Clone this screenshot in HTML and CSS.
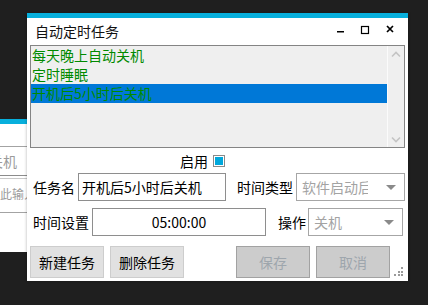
FILE: index.html
```html
<!DOCTYPE html>
<html lang="zh-CN">

<head>
    <meta charset="UTF-8">
    <meta name="viewport" content="width=device-width, initial-scale=1.0">
    <title>自动定时任务</title>
    <link rel="stylesheet" href="styles.css">
</head>

<body>
    <div class="desk">

        <!-- window behind, only its right edge shows -->
        <div class="win back">
            <div class="accent"></div>
            <div class="bk-field"></div>
            <div class="bk-combo"><span>关机</span></div>
            <div class="bk-gap"></div>
            <div class="bk-input"><span>在此输入</span></div>
        </div>

        <div class="win main">
            <div class="accent"></div>
            <div class="titlebar">
                <span class="title">自动定时任务</span>
                <svg class="ctrls" width="64" height="27" viewBox="0 0 64 27">
                    <rect x="3" y="13" width="7" height="1.5" fill="#000" />
                    <rect x="27.5" y="8.5" width="7" height="7" fill="none" stroke="#000" stroke-width="1.2" />
                    <path d="M53 8 L59 14 M59 8 L53 14" stroke="#000" stroke-width="1.7" />
                </svg>
            </div>

            <div class="listbox">
                <ul class="items">
                    <li>每天晚上自动关机</li>
                    <li>定时睡眠</li>
                    <li class="sel">开机后5小时后关机</li>
                </ul>
                <div class="vscroll">
                    <svg width="16" height="16" viewBox="0 0 16 16">
                        <path d="M4 10.5 L8 6.5 L12 10.5" fill="none" stroke="#c4c4c4" stroke-width="1.6" />
                    </svg>
                    <svg width="16" height="16" viewBox="0 0 16 16">
                        <path d="M4 6.5 L8 10.5 L12 6.5" fill="none" stroke="#c4c4c4" stroke-width="1.6" />
                    </svg>
                </div>
            </div>

            <div class="row enable">
                <span>启用</span>
                <span class="check"><i></i></span>
            </div>

            <div class="row fields">
                <label class="lbl">任务名</label>
                <div class="textbox name">开机后5小时后关机</div>
                <label class="lbl type-lbl">时间类型</label>
                <div class="combo type"><span>软件启动后</span><i class="arrow"></i></div>
            </div>

            <div class="row fields second">
                <label class="lbl">时间设置</label>
                <div class="textbox time">05:00:00</div>
                <label class="lbl op-lbl">操作</label>
                <div class="combo op"><span>关机</span><i class="arrow"></i></div>
            </div>

            <div class="row buttons">
                <button class="btn">新建任务</button>
                <button class="btn">删除任务</button>
                <button class="btn off push">保存</button>
                <button class="btn off">取消</button>
            </div>

            <!-- size grip -->
            <svg class="grip" width="12" height="12" viewBox="0 0 12 12">
                <rect x="8" y="1" width="2" height="2" fill="#9a9a9a" />
                <rect x="5" y="5" width="2" height="2" fill="#9a9a9a" />
                <rect x="8" y="5" width="2" height="2" fill="#9a9a9a" />
                <rect x="1" y="8" width="2" height="2" fill="#9a9a9a" />
                <rect x="5" y="8" width="2" height="2" fill="#9a9a9a" />
                <rect x="8" y="8" width="2" height="2" fill="#9a9a9a" />
            </svg>
        </div>
    </div>
</body>

</html>
```

FILE: styles.css
```css
* {
    box-sizing: border-box;
}

body {
    margin: 0;
    background-color: #1f1f1f;
    font-family: "Noto Sans CJK SC", "Noto Sans", sans-serif;
    font-size: 14px;
    color: #000;
}

.desk {
    position: relative;
    width: 428px;
    height: 305px;
    overflow: hidden;
}

.win {
    position: absolute;
    background-color: #fff;
}

.accent {
    height: 5px;
    background-color: #07afdc;
}

/* back window */

.back {
    left: 0;
    top: 119px;
    width: 27px;
    height: 133px;
    overflow: hidden;
}

.bk-field {
    height: 23px;
    border-bottom: 1px solid #a3a3a3;
}

.bk-combo {
    height: 29px;
    line-height: 28px;
    border-bottom: 1px solid #8c8c8c;
    color: #9b9b9b;
    white-space: nowrap;
}

.bk-combo span {
    margin-left: -11px;
}

.bk-gap {
    height: 3px;
    border-bottom: 1px solid #c9c9c9;
}

.bk-input {
    height: 34px;
    line-height: 30px;
    border-bottom: 1px solid #a3a3a3;
    font-size: 12px;
    color: #9b9b9b;
    white-space: nowrap;
}

.bk-input span {
    margin-left: -12px;
}

/* main window */

.main {
    left: 27px;
    top: 13px;
    width: 381px;
    height: 268px;
    box-shadow: 0 0 3px rgba(0, 0, 0, 0.3);
}

.titlebar {
    display: flex;
    align-items: center;
    height: 27px;
    padding-left: 8px;
}

.title {
    line-height: 27px;
    color: #111;
}

.ctrls {
    margin-left: auto;
    margin-right: 10px;
}

.listbox {
    display: flex;
    height: 103px;
    margin: 0 3px;
    border: 1px solid #848484;
    background-color: #efefef;
}

.items {
    flex: 1;
    list-style-type: none;
    margin: 0;
    padding: 0;
}

.items li {
    height: 19px;
    line-height: 19px;
    padding-left: 1px;
    color: #008a00;
    white-space: nowrap;
}

.items li.sel {
    background-color: #0078d7;
}

.vscroll {
    display: flex;
    flex-direction: column;
    justify-content: space-between;
    width: 17px;
    border-left: 1px solid #fbfbfb;
}

.row {
    display: flex;
    align-items: center;
}

.enable {
    height: 25px;
    padding-left: 153px;
    gap: 5px;
}

.check {
    width: 12px;
    height: 12px;
    padding: 1px;
    border: 1px solid #8a8a8a;
    background-color: #fff;
}

.check i {
    display: block;
    width: 8px;
    height: 8px;
    background-color: #00a8dc;
}

.fields {
    height: 28px;
    padding-left: 6px;
}

.second {
    margin-top: 7px;
}

.lbl {
    white-space: nowrap;
    line-height: 28px;
}

.textbox {
    height: 28px;
    line-height: 26px;
    border: 1px solid #8e8e8e;
    padding: 0 3px;
    white-space: nowrap;
}

.name {
    width: 148px;
    margin-left: 3px;
}

.time {
    width: 174px;
    margin-left: 3px;
    text-align: center;
}

.type-lbl {
    margin-left: 11px;
}

.op-lbl {
    margin-left: 12px;
}

.combo {
    position: relative;
    display: flex;
    align-items: center;
    height: 28px;
    border: 1px solid #a6a6a6;
    padding-left: 5px;
    color: #a3a3a3;
}

.combo span {
    width: 66px;
    overflow: hidden;
    white-space: nowrap;
}

.type {
    width: 109px;
    margin-left: 3px;
}

.op {
    width: 95px;
    margin-left: 2px;
}

.arrow {
    position: absolute;
    right: 8px;
    top: 11px;
    width: 0;
    height: 0;
    border-left: 5px solid transparent;
    border-right: 5px solid transparent;
    border-top: 5px solid #8a8a8a;
}

.buttons {
    margin-top: 10px;
    padding: 0 18px 0 3px;
    gap: 6px;
}

.btn {
    width: 74px;
    height: 32px;
    padding: 0;
    font-family: inherit;
    font-size: 14px;
    color: #000;
    background-color: #e1e1e1;
    border: 1px solid #cdcdcd;
}

.btn.off {
    background-color: #cccccc;
    border-color: #a2a2a2;
    color: #9ea6ad;
}

.push {
    margin-left: auto;
}

.grip {
    position: absolute;
    right: 3px;
    bottom: 3px;
}
```
